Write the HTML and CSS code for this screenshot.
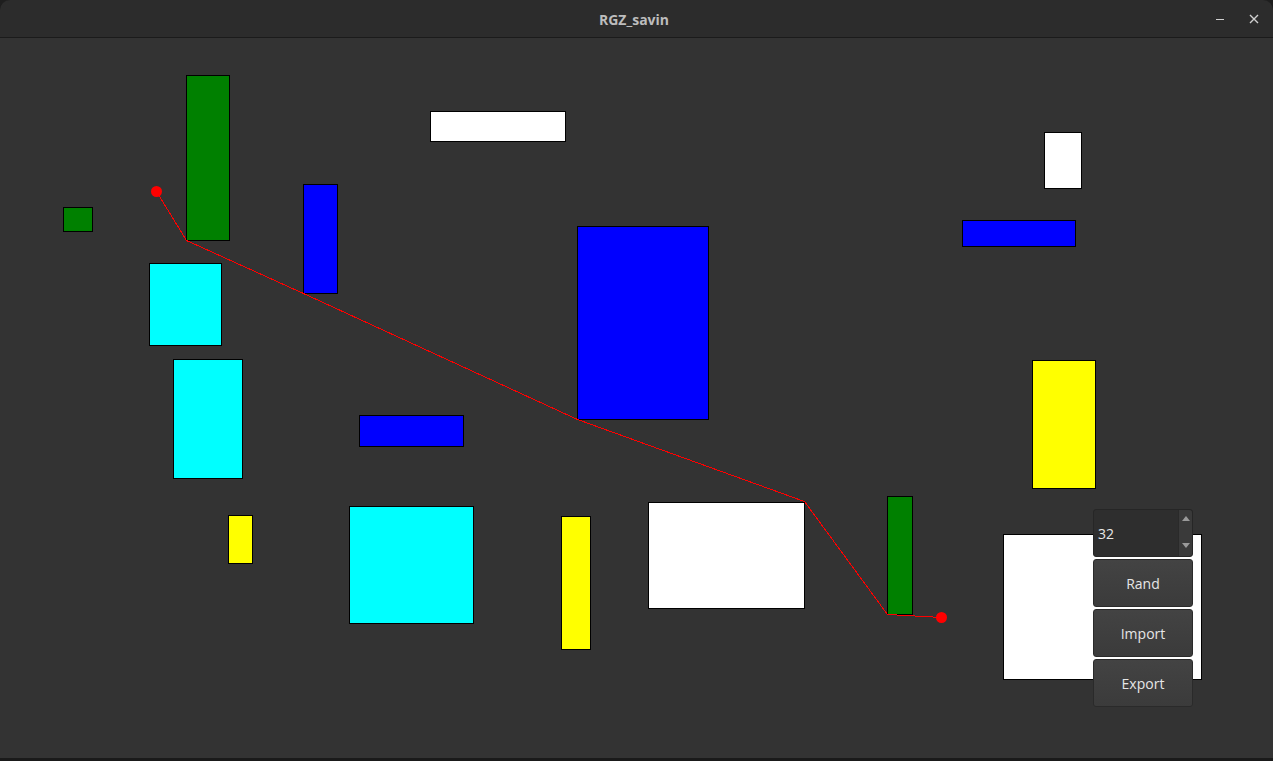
FILE: index.html
```html
<!DOCTYPE html>
<html lang="en">
<head>
<meta charset="utf-8">
<title>RGZ_savin</title>
<link rel="stylesheet" href="styles.css">
</head>
<body>
<div class="window">
  <header class="titlebar">
    <span class="title">RGZ_savin</span>
    <div class="wm-buttons">
      <span class="wm-btn wm-min"></span>
      <span class="wm-btn wm-close">
        <svg width="10" height="10" viewBox="0 0 10 10"><path d="M1 1L9 9M9 1L1 9" stroke="#d0d0d0" stroke-width="1.4"/></svg>
      </span>
    </div>
  </header>
  <main class="canvas">
    <svg class="scene" width="1273" height="720" viewBox="0 38 1273 720">
      <g stroke="#000" stroke-width="1">
        <rect x="186.5" y="75.5" width="43" height="165" fill="#008000"/>
        <rect x="63.5" y="207.5" width="29" height="24" fill="#008000"/>
        <rect x="430.5" y="111.5" width="135" height="30" fill="#ffffff"/>
        <rect x="303.5" y="184.5" width="34" height="109" fill="#0000ff"/>
        <rect x="149.5" y="263.5" width="72" height="82" fill="#00ffff"/>
        <rect x="173.5" y="359.5" width="69" height="119" fill="#00ffff"/>
        <rect x="577.5" y="226.5" width="131" height="193" fill="#0000ff"/>
        <rect x="359.5" y="415.5" width="104" height="31" fill="#0000ff"/>
        <rect x="228.5" y="515.5" width="24" height="48" fill="#ffff00"/>
        <rect x="349.5" y="506.5" width="124" height="117" fill="#00ffff"/>
        <rect x="561.5" y="516.5" width="29" height="133" fill="#ffff00"/>
        <rect x="648.5" y="502.5" width="156" height="106" fill="#ffffff"/>
        <rect x="887.5" y="496.5" width="25" height="118" fill="#008000"/>
        <rect x="1044.5" y="132.5" width="37" height="56" fill="#ffffff"/>
        <rect x="962.5" y="220.5" width="113" height="26" fill="#0000ff"/>
        <rect x="1032.5" y="360.5" width="63" height="128" fill="#ffff00"/>
        <rect x="1003.5" y="534.5" width="198" height="145" fill="#ffffff"/>
      </g>
      <polyline points="156.5,191.5 186.5,240.5 303.5,293.5 577.5,419.5 804.5,501.5 887.5,614.5 941.5,617.5" fill="none" stroke="#ff0000" stroke-width="1" shape-rendering="crispEdges"/>
      <circle cx="156.5" cy="191.5" r="5.5" fill="#ff0000"/>
      <circle cx="941.5" cy="617.5" r="5.5" fill="#ff0000"/>
    </svg>
    <div class="controls">
      <div class="spinbox">
        <span class="spin-value">32</span>
        <div class="spin-arrows">
          <svg width="8" height="5" viewBox="0 0 8 5"><path d="M0 5L4 0L8 5Z" fill="#9a9a9a"/></svg>
          <svg width="8" height="5" viewBox="0 0 8 5"><path d="M0 0L4 5L8 0Z" fill="#9a9a9a"/></svg>
        </div>
      </div>
      <button class="btn">Rand</button>
      <button class="btn">Import</button>
      <button class="btn">Export</button>
    </div>
  </main>
  <div class="bottom-edge"></div>
</div>
</body>
</html>
```
FILE: styles.css
```css
html, body {
  margin: 0;
  padding: 0;
  background: #1e1e1e;
  width: 1273px;
  height: 761px;
  overflow: hidden;
}
.window {
  width: 1273px;
  height: 761px;
  display: flex;
  flex-direction: column;
  font-family: "Open Sans", "Noto Sans", "DejaVu Sans", sans-serif;
}
.titlebar {
  height: 37px;
  background: #2c2c2c;
  border-bottom: 1px solid #1b1b1b;
  border-radius: 10px 10px 0 0;
  display: flex;
  align-items: center;
  justify-content: center;
  position: relative;
  flex: none;
}
.title {
  color: #bdbdbd;
  font-weight: bold;
  font-size: 14px;
  margin-top: 1px;
  margin-right: 5px;
}
.wm-buttons {
  position: absolute;
  right: 9px;
  top: 0;
  height: 37px;
  display: flex;
  align-items: center;
  gap: 14px;
}
.wm-btn {
  width: 20px;
  height: 20px;
  display: flex;
  align-items: center;
  justify-content: center;
}
.wm-min::before {
  content: "";
  display: block;
  width: 8px;
  height: 1.5px;
  background: #d0d0d0;
  margin-top: 2px;
}
.canvas {
  position: relative;
  height: 720px;
  background: #333333;
  flex: none;
}
.scene {
  display: block;
}
.controls {
  position: absolute;
  left: 1093px;
  top: 471px;
  width: 100px;
  display: flex;
  flex-direction: column;
  gap: 2px;
}
.spinbox {
  height: 48px;
  box-sizing: border-box;
  background: #2e2e2e;
  border: 1px solid #262626;
  border-radius: 3px;
  display: flex;
  align-items: stretch;
}
.spin-value {
  flex: 1;
  display: flex;
  align-items: center;
  padding-left: 4px;
  color: #e8e8e8;
  font-size: 14px;
}
.spin-arrows {
  width: 13px;
  background: #3a3a3a;
  border-left: 1px solid #2a2a2a;
  border-radius: 0 3px 3px 0;
  display: flex;
  flex-direction: column;
  justify-content: space-between;
  align-items: center;
  padding: 6px 0 8px;
}
.btn {
  height: 48px;
  margin: 0;
  box-sizing: border-box;
  background: linear-gradient(#434343, #3b3b3b);
  border: 1px solid #2a2a2a;
  border-radius: 3px;
  color: #e6e6e6;
  font-family: "Open Sans", "Noto Sans", "DejaVu Sans", sans-serif;
  font-size: 14px;
  padding: 0;
}
.bottom-edge {
  height: 3px;
  background: #1a1a1a;
  flex: none;
}
```
